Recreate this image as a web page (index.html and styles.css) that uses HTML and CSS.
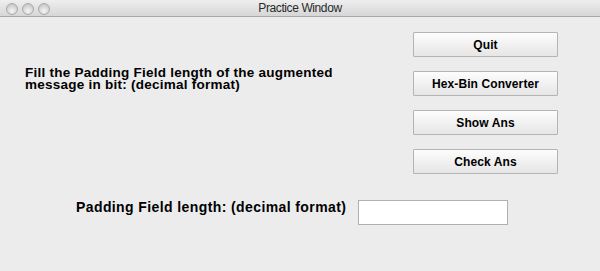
FILE: index.html
```html
<!DOCTYPE html>
<html>
<head>
  <meta charset="UTF-8">
  <title>Practice Window</title>
  <link rel="stylesheet" href="styles.css">
</head>
<body>
  <div class="window">
    <div class="titlebar">
      <div class="lights">
        <span class="light"></span>
        <span class="light"></span>
        <span class="light"></span>
      </div>
      <div class="title">Practice Window</div>
    </div>
    <div class="content">
      <div class="main">
        <div class="question">
          <div class="line">Fill the Padding Field length of the augmented</div>
          <div class="line">message in bit: (decimal format)</div>
        </div>
        <div class="buttons">
          <button class="btn">Quit</button>
          <button class="btn">Hex-Bin Converter</button>
          <button class="btn">Show Ans</button>
          <button class="btn">Check Ans</button>
        </div>
      </div>
      <div class="answer">
        <label class="answer-label">Padding Field length: (decimal format)</label>
        <input class="answer-input" type="text">
      </div>
    </div>
  </div>
</body>
</html>
```

FILE: styles.css
```css
html, body {
	margin:0px;
	padding:0px;
	width:600px;
	height:271px;
	overflow:hidden;
}

body {
	background:#ececec;
	font-family:"Liberation Sans", Arial, Helvetica, sans-serif;
	color:#000000;
}

.window {
	height:271px;
	display:flex;
	flex-direction:column;
}

.titlebar {
	height:16px;
	border-bottom:1px solid #a8a8a8;
	background:linear-gradient(#eeeeee, #d6d6d6);
	display:flex;
	align-items:center;
	position:relative;
}

.lights {
	display:flex;
	gap:4px;
	padding-left:6px;
	padding-top:1px;
}

.light {
	width:10px;
	height:10px;
	border-radius:50%;
	border:1px solid #aaaaaa;
	background:radial-gradient(circle at 50% 70%, #f6f6f6, #cdcdcd 70%);
}

.title {
	position:absolute;
	left:0;
	right:0;
	top:0;
	text-align:center;
	font-family:"Liberation Sans", Arial, sans-serif;
	font-size:12px;
	letter-spacing:-0.4px;
	line-height:17px;
	color:#2a2a2a;
}

.content {
	flex:1;
	display:flex;
	flex-direction:column;
}

.main {
	display:flex;
	justify-content:space-between;
	padding:15px 42px 0px 25px;
}

.question {
	font-weight:bold;
	font-size:13.5px;
	letter-spacing:0.25px;
	line-height:12px;
	margin-top:35px;
}

.buttons {
	display:flex;
	flex-direction:column;
	gap:14px;
}

.btn {
	width:145px;
	height:25px;
	margin:0;
	padding:0;
	border:1px solid #b4b4b4;
	border-radius:1px;
	background:linear-gradient(#fdfdfd, #f1f1f1 50%, #e6e6e6);
	font-family:"Liberation Sans", Arial, sans-serif;
	font-weight:bold;
	font-size:12px;
	letter-spacing:0.1px;
	color:#000000;
}

.answer {
	display:flex;
	align-items:flex-start;
	gap:12px;
	padding-left:76px;
	margin-top:26px;
}

.answer-label {
	font-weight:bold;
	font-size:14px;
	letter-spacing:0.4px;
	line-height:14px;
}

.answer-input {
	width:150px;
	height:25px;
	margin:0;
	padding:0;
	box-sizing:border-box;
	border:1px solid #b0b0b0;
	background:#ffffff;
}
```
